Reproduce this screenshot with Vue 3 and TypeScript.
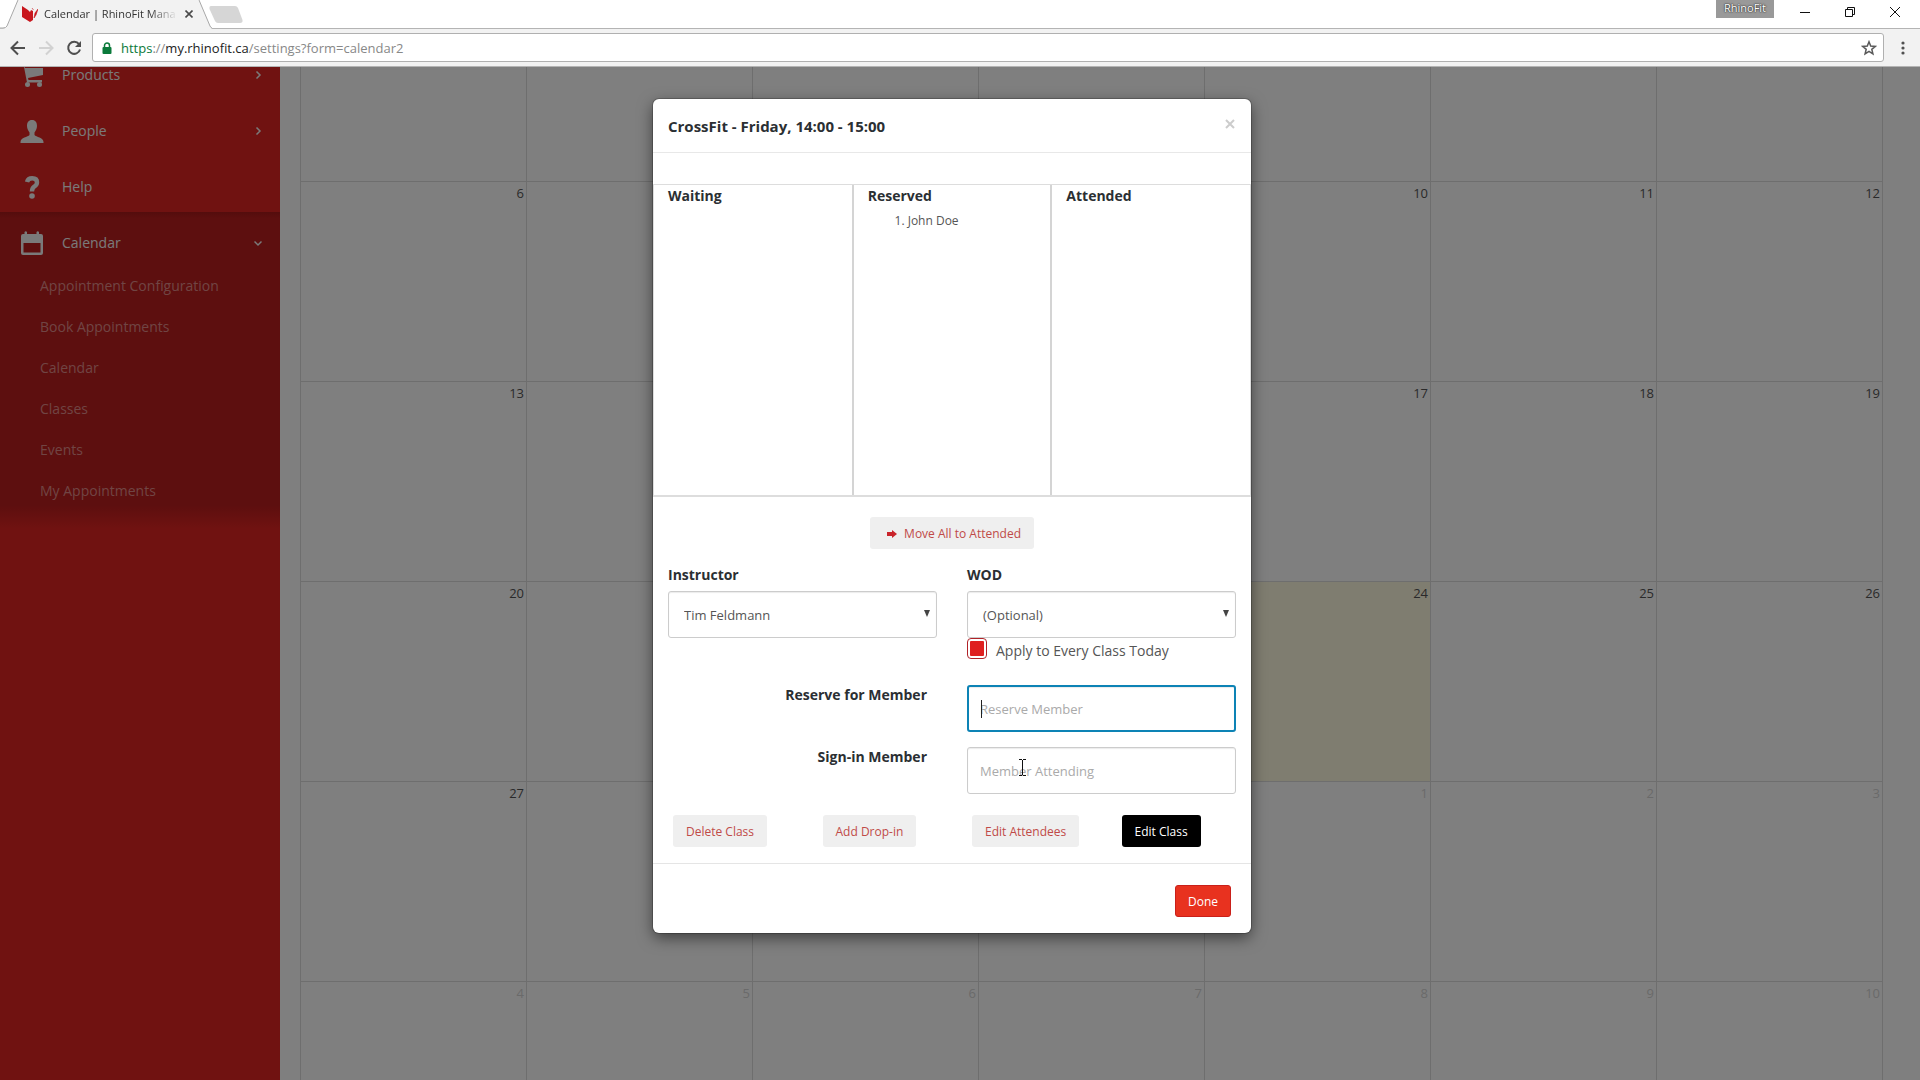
<script setup lang="ts">
import { ref } from 'vue'

interface Day {
  label: string
  other?: boolean
  today?: boolean
}

const navItems = ['Products', 'People', 'Help']
const subItems = [
  'Appointment Configuration',
  'Book Appointments',
  'Calendar',
  'Classes',
  'Events',
  'My Appointments',
]

// November runs from the second row to the fifth; the rest belongs to December.
const days: Day[] = []
for (let i = 0; i < 7; i++) days.push({ label: '' })
for (let n = 6; n <= 30; n++) days.push({ label: String(n), today: n === 24 })
for (let n = 1; n <= 10; n++) days.push({ label: String(n), other: true })

const instructor = ref('Tim Feldmann')
const wod = ref('(Optional)')
const applyAll = ref(true)
const reserveName = ref('')
const signInName = ref('')
</script>

<template>
  <div class="window">
    <header class="chrome">
      <div class="tabs">
        <div class="tab">
          <svg class="tab-shape" width="212" height="29" viewBox="0 0 212 29" aria-hidden="true">
            <path d="M0 28.5H3Q6 28.5 7 26L17 2Q18 0 20 0H197Q199 0 200 2L210 26Q211 28.5 212 28.5V29H0Z" fill="#f2f2f2" />
            <path d="M0 28H3Q6 28 7 26L18 0M199 0L210 26Q211 28 212 28" fill="none" stroke="#a8a8a8" />
          </svg>
          <svg class="favicon" width="16" height="16" viewBox="0 0 16 16" aria-hidden="true">
            <path d="M0 0L6 4L8 6L9 4L11 5V14L8 16L0 11Z" fill="#c8161d" />
            <path d="M10 2L11.500 4M16 3L14 9L12 12L13 7Z" fill="#c8161d" stroke="#c8161d" stroke-width="0.600" />
          </svg>
          <span class="tab-title">Calendar | RhinoFit Mana</span>
          <button class="plain" aria-label="Close tab">
            <svg width="8" height="8" viewBox="0 0 8 8"><path d="M0.5 0.5L7.500 7.500M7.500 0.5L0.5 7.500" stroke="#4a4a4a" stroke-width="1.600" /></svg>
          </button>
        </div>
        <button class="plain new-tab" aria-label="New tab">
          <svg width="34" height="17" viewBox="0 0 34 17"><path d="M2 0H26Q28 0 29 2L33.500 14Q34 17 31 17H9Q7 17 6 15L0.500 3Q0 0 2 0Z" fill="#d6d6d6" /></svg>
        </button>
        <div class="win-controls">
          <span class="profile">RhinoFit</span>
          <button class="plain win" aria-label="Minimize"><svg width="10" height="10" viewBox="0 0 10 10"><path d="M0 5.500H10" stroke="#111" /></svg></button>
          <button class="plain win" aria-label="Restore"><svg width="10" height="10" viewBox="0 0 10 10" fill="none" stroke="#111"><path d="M0.500 2.500H7.500V9.500H0.500ZM2.500 2.500V0.500H9.500V7.500H7.500" /></svg></button>
          <button class="plain win" aria-label="Close"><svg width="10" height="10" viewBox="0 0 10 10"><path d="M0 0L10 10M10 0L0 10" stroke="#111" /></svg></button>
        </div>
      </div>
      <div class="toolbar">
        <button class="plain" aria-label="Back"><svg width="16" height="16" viewBox="0 0 16 16" fill="none" stroke="#4f4f4f" stroke-width="2"><path d="M15 8H2M8 1.500L1.500 8L8 14.500" /></svg></button>
        <button class="plain" aria-label="Forward"><svg width="16" height="16" viewBox="0 0 16 16" fill="none" stroke="#d2d2d2" stroke-width="2"><path d="M1 8H14M8 1.500L14.500 8L8 14.500" /></svg></button>
        <button class="plain" aria-label="Reload"><svg width="16" height="16" viewBox="0 0 16 16"><path d="M13 4.200A6 6 0 1 0 14 9.500" fill="none" stroke="#4f4f4f" stroke-width="2" /><path d="M15 1V7H9Z" fill="#4f4f4f" /></svg></button>
        <div class="address">
          <svg width="10" height="12" viewBox="0 0 10 12" aria-hidden="true"><path d="M2.500 6V3.500A2.500 2.500 0 0 1 7.500 3.500V6" fill="none" stroke="#0b7a3b" stroke-width="1.500" /><rect x="0.500" y="5" width="9" height="7" rx="1" fill="#0b7a3b" /></svg>
          <span class="url"><span class="scheme">https</span>://<span class="host">my.rhinofit.ca</span>/settings?form=calendar2</span>
          <button class="plain" aria-label="Bookmark this page"><svg width="16" height="16" viewBox="0 0 16 16"><path d="M8 1.800L9.700 6.100L14.300 6.400L10.800 9.300L11.900 13.800L8 11.300L4.100 13.800L5.200 9.300L1.700 6.400L6.300 6.100Z" fill="none" stroke="#5a5a5a" stroke-width="1.500" /></svg></button>
        </div>
        <button class="plain menu" aria-label="Menu"><svg width="4" height="14" viewBox="0 0 4 14" fill="#505050"><circle cx="2" cy="2" r="1.600" /><circle cx="2" cy="7" r="1.600" /><circle cx="2" cy="12" r="1.600" /></svg></button>
      </div>
    </header>

    <div class="page">
      <nav class="sidebar">
        <ul class="nav">
          <li v-for="item in navItems" :key="item">
            <a href="#" class="nav-link">
              <svg v-if="item === 'Products'" class="nav-icon" viewBox="0 0 24 24"><path d="M0 2H4L5 5H23V12L8 15L8.500 17H22V19.500H7L4 4H0Z" /><circle cx="7.500" cy="21.500" r="2.500" /><circle cx="19.500" cy="21.500" r="2.500" /></svg>
              <svg v-else-if="item === 'People'" class="nav-icon" viewBox="0 0 24 24"><path d="M12 1C15.500 1 17 3.500 17 7C17 10 15.500 12 14.500 13.500V16C16 18 23.500 18.500 23.500 23V24H0.500V23C0.500 18.500 8 18 9.500 16V13.500C8.500 12 7 10 7 7C7 3.500 8.500 1 12 1Z" /></svg>
              <svg v-else class="nav-icon" viewBox="0 0 24 24"><path d="M7 7Q8 3.200 12.200 3.200Q17 3.200 17 7.200Q17 10 14.200 11.600Q12 13 12 16.500" fill="none" stroke="#f4f4f4" stroke-width="4.400" /><circle cx="12" cy="21" r="2.800" /></svg>
              <span>{{ item }}</span>
              <svg v-if="item !== 'Help'" class="chev" viewBox="0 0 8 8"><path d="M2.500 0.500L6 4L2.500 7.500" /></svg>
            </a>
          </li>
          <li class="open">
            <a href="#" class="nav-link">
              <svg class="nav-icon" viewBox="0 0 24 24"><path fill-rule="evenodd" d="M3 3H4.500V1Q5.800 -0.500 7 1V3H16.500V1Q17.800 -0.500 19 1V3H21Q23 3 23 5V22Q23 24 21 24H3Q1 24 1 22V5Q1 3 3 3ZM3.500 12V21.500H20.500V12Z" /></svg>
              <span>Calendar</span>
              <svg class="chev" viewBox="0 0 8 8"><path d="M0.500 2.500L4 6L7.500 2.500" /></svg>
            </a>
            <ul class="sub">
              <li v-for="item in subItems" :key="item"><a href="#">{{ item }}</a></li>
            </ul>
          </li>
        </ul>
      </nav>

      <main class="content">
        <div class="month">
          <div v-for="(day, i) in days" :key="i" class="day" :class="{ other: day.other, today: day.today }">{{ day.label }}</div>
        </div>
      </main>

      <div class="backdrop">
        <section class="modal" role="dialog" aria-labelledby="modal-title">
          <header class="modal-head">
            <h1 id="modal-title">CrossFit - Friday, 14:00 - 15:00</h1>
            <button class="plain" aria-label="Close"><svg width="10" height="10" viewBox="0 0 10 10"><path d="M1 1L9 9M9 1L1 9" stroke="#ccc" stroke-width="2" /></svg></button>
          </header>

          <div class="lists">
            <div class="list"><h2>Waiting</h2></div>
            <div class="list">
              <h2>Reserved</h2>
              <ol><li>John Doe</li></ol>
            </div>
            <div class="list"><h2>Attended</h2></div>
          </div>

          <div class="move">
            <button class="btn">
              <svg width="10" height="8" viewBox="0 0 10 8" aria-hidden="true"><path d="M0 2H5V0L10 4L5 8V6H0Z" fill="#c9242b" /></svg>
              Move All to Attended
            </button>
          </div>

          <form class="form" @submit.prevent>
            <div class="field">
              <label for="instructor">Instructor</label>
              <div class="select-wrap">
                <select id="instructor" v-model="instructor"><option>Tim Feldmann</option></select>
              </div>
            </div>
            <div class="field">
              <label for="wod">WOD</label>
              <div class="select-wrap">
                <select id="wod" v-model="wod"><option>(Optional)</option></select>
              </div>
              <div class="check">
                <input id="apply" v-model="applyAll" type="checkbox" />
                <label for="apply">Apply to Every Class Today</label>
              </div>
            </div>
            <label class="side-label" for="reserve">Reserve for Member</label>
            <div class="text-wrap">
              <input id="reserve" v-model="reserveName" class="active" type="text" placeholder="Reserve Member" />
              <span class="caret"></span>
            </div>
            <label class="side-label" for="signin">Sign-in Member</label>
            <div class="text-wrap">
              <input id="signin" v-model="signInName" type="text" placeholder="Member Attending" />
              <svg class="pointer" width="7" height="17" viewBox="0 0 7 17" aria-hidden="true"><path d="M0 0.500H3M4 0.500H7M3.500 1V16M0 16.500H3M4 16.500H7" stroke="#111" fill="none" /></svg>
            </div>
          </form>

          <div class="actions">
            <div><button class="btn">Delete Class</button></div>
            <div><button class="btn">Add Drop-in</button></div>
            <div><button class="btn">Edit Attendees</button></div>
            <div><button class="btn dark">Edit Class</button></div>
          </div>

          <footer class="modal-foot"><button class="btn red">Done</button></footer>
        </section>
      </div>
    </div>
  </div>
</template>

<style>
body {
  margin: 0;
  overflow: hidden;
}
</style>

<style scoped>
* {
  box-sizing: border-box;
}
.window {
  display: flex;
  flex-direction: column;
  height: 100vh;
  font-family: "Open Sans", "Noto Sans", sans-serif;
  font-size: 14px;
  color: #555;
}
ul,
ol,
h1,
h2 {
  margin: 0;
  padding: 0;
}
ul {
  list-style: none;
}
a {
  text-decoration: none;
}
.plain {
  display: flex;
  align-items: center;
  justify-content: center;
  padding: 0;
  border: 0;
  background: none;
}

/* Browser chrome */
.chrome {
  background: #f2f2f2;
  border-bottom: 1px solid #b4b4b4;
}
.tabs {
  display: flex;
  height: 29px;
  background: linear-gradient(#fff 28px, #b4b4b4 28px);
}
.tab {
  position: relative;
  display: flex;
  align-items: center;
  width: 212px;
  padding: 0 19px 2px 22px;
}
.tab-shape {
  position: absolute;
  inset: 0;
}
.favicon,
.tab-title,
.tab .plain {
  position: relative;
}
.tab-title {
  flex: 1;
  margin-left: 6px;
  white-space: nowrap;
  font-size: 11px;
  color: #333;
  mask-image: linear-gradient(90deg, #000 75%, transparent 95%);
}
.new-tab {
  align-self: flex-start;
  margin-top: 6px;
  margin-left: -3px;
}
.win-controls {
  display: flex;
  margin-left: auto;
  padding-right: 3px;
}
.profile {
  width: 58px;
  height: 18px;
  margin-right: 8px;
  background: #999;
  color: #fff;
  font-size: 11px;
  line-height: 16px;
  text-align: center;
  text-shadow: 0 0 2px #222, 0 0 1px #222;
}
.win {
  width: 45px;
  height: 24px;
}
.toolbar {
  display: flex;
  align-items: center;
  gap: 12px;
  height: 37px;
  padding: 0 10px;
}
.address {
  display: flex;
  flex: 1;
  align-items: center;
  height: 29px;
  margin-left: -2px;
  padding: 0 6px 0 9px;
  border: 1px solid #b0b0b0;
  border-radius: 3px;
  background: #fff;
}
.url {
  flex: 1;
  margin-left: 9px;
  color: #888;
  font-size: 13px;
}
.scheme {
  color: #0b7a3b;
}
.host {
  color: #222;
}
.menu {
  width: 14px;
}

/* Page */
.page {
  position: relative;
  display: flex;
  flex: 1;
  min-height: 0;
  overflow: hidden;
  background: #fff;
}
.sidebar {
  flex: none;
  width: 280px;
  overflow: hidden;
  background: #e12522;
}
.nav {
  margin-top: -23px;
}
.nav-link {
  display: flex;
  align-items: center;
  height: 56px;
  padding: 5px 18px 0 20px;
  color: #f4f4f4;
  font-size: 14px;
  line-height: 14px;
}
.nav-icon {
  width: 24px;
  height: 24px;
  margin-right: 18px;
  fill: #f4f4f4;
}
.chev {
  width: 8px;
  height: 8px;
  margin-left: auto;
  fill: none;
  stroke: #f4f4f4;
  stroke-width: 1.5;
}
.open {
  padding-bottom: 18px;
  background: linear-gradient(#a81a1a, #ba1e1e 6px, #ba1e1e calc(100% - 24px), #e12522);
}
.sub a {
  display: block;
  padding-left: 40px;
  color: #e08a88;
  font-size: 14px;
  line-height: 41px;
}
.sub {
  margin-top: -3px;
}
.content {
  flex: 1;
  padding: 0 37px 0 20px;
}
.month {
  display: grid;
  grid-template-columns: repeat(7, 1fr);
  grid-template-rows: 115px;
  grid-auto-rows: 200px;
  border-left: 1px solid #ddd;
}
.day {
  padding: 2px 2px 0 0;
  border-right: 1px solid #ddd;
  border-bottom: 1px solid #ddd;
  color: #555;
  font-size: 13px;
  line-height: 18px;
  text-align: right;
}
.today {
  background: #fffae0;
}
.other {
  color: #d4d4d4;
}

/* Dialog */
.backdrop {
  position: absolute;
  inset: 0;
  display: flex;
  align-items: flex-start;
  justify-content: center;
  padding: 32px 16px 0 0;
  background: rgba(0, 0, 0, 0.5);
}
.modal {
  width: 598px;
  border-radius: 6px;
  background: #fff;
  box-shadow: 0 0 0 1px rgba(0, 0, 0, 0.2), 0 5px 15px rgba(0, 0, 0, 0.5);
}
.modal-head {
  display: flex;
  justify-content: space-between;
  align-items: center;
  height: 54px;
  padding: 0 16px 0 15px;
  border-bottom: 1px solid #e8e8e8;
}
.modal-head .plain {
  padding-bottom: 4px;
}
h1,
h2,
.field > label,
.side-label {
  color: #2b2f33;
  font-size: 14px;
  font-weight: 700;
}
h1 {
  font-size: 15px;
}
.lists {
  display: grid;
  grid-template-columns: repeat(3, 1fr);
  height: 313px;
  margin-top: 31px;
  border: 1px solid #ddd;
  border-width: 1px 1px 2px;
}
.list {
  padding: 0 14px;
}
.list + .list {
  margin-left: -1px;
  border-left: 2px solid #d4d4d4;
}
h2 {
  line-height: 22px;
}
ol {
  padding-left: 40px;
  font-size: 12px;
  line-height: 28px;
}
.move {
  display: flex;
  justify-content: center;
  margin: 20px 0 17px;
}
.btn {
  height: 32px;
  padding: 0 13px;
  border: 0;
  border-radius: 3px;
  background: #efefef;
  color: #c04a48;
  font-family: inherit;
  font-size: 12px;
}
.move .btn {
  padding: 0 13px 0 17px;
}
.move svg {
  margin-right: 4px;
}
.form {
  display: grid;
  grid-template-columns: 1fr 1fr;
  column-gap: 30px;
  padding: 0 15px;
}
.field > label {
  display: block;
  line-height: 18px;
  margin-bottom: 7px;
}
.select-wrap,
.text-wrap {
  position: relative;
}
.select-wrap::after {
  content: "";
  position: absolute;
  top: 19px;
  right: 7px;
  border: 3px solid transparent;
  border-top: 7px solid #444;
  border-bottom: 0;
}
select,
input[type="text"] {
  display: block;
  width: 100%;
  height: 47px;
  border: 1px solid #ccc;
  border-radius: 3px;
  background: #fff;
  box-shadow: inset 0 1px 1px rgba(0, 0, 0, 0.08);
  color: #555;
  font-family: inherit;
  font-size: 13px;
}
select {
  padding: 0 15px;
  appearance: none;
}
input[type="text"] {
  padding: 0 12px;
}
input::placeholder {
  color: #aaa;
}
input.active {
  border: 2px solid #0d83b5;
  padding: 0 11px;
}
.check {
  display: flex;
  align-items: flex-start;
  height: 24px;
  margin-bottom: 23px;
}
.check input {
  appearance: none;
  width: 20px;
  height: 21px;
  margin: 0 9px 0 0;
  border: 1px solid #b02228;
  border-radius: 4px;
  background: #fff;
}
.check input:checked {
  background: #df1f1f content-box;
  padding: 2px;
}
.check label {
  font-size: 14px;
  line-height: 26px;
}
.side-label {
  padding-right: 10px;
  text-align: right;
  line-height: 20px;
}
.text-wrap {
  margin-bottom: 15px;
}
.caret {
  position: absolute;
  top: 15px;
  left: 14px;
  width: 1px;
  height: 18px;
  background: #222;
}
.pointer {
  position: absolute;
  top: 12px;
  left: 52px;
}
.actions {
  display: grid;
  grid-template-columns: repeat(4, 1fr);
  padding: 6px 0 16px;
}
.actions > div {
  padding-left: 20px;
}
.dark {
  background: #000;
  color: #fff;
}
.modal-foot {
  display: flex;
  justify-content: flex-end;
  padding: 21px 20px 16px;
  border-top: 1px solid #e5e5e5;
}
.red {
  padding: 0 12px;
  border: 1px solid #c9201a;
  background: #e8321f;
  color: #fff;
}
</style>
